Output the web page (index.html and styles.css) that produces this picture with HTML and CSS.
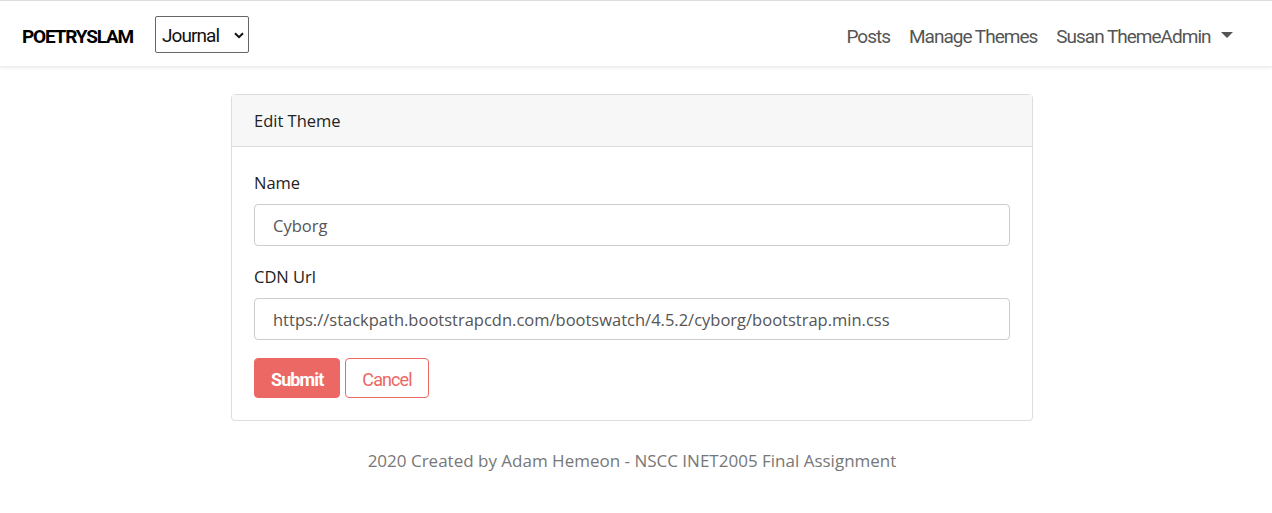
FILE: index.html
```html
<!DOCTYPE html>
<html>
<head>
<meta charset="utf-8">
<link rel="stylesheet" href="styles.css">
</head>
<body>
<nav class="navbar">
  <div class="nav-left">
    <a class="brand">POETRYSLAM</a>
    <div class="theme-select">
      <span>Journal</span>
      <svg width="10" height="7" viewBox="0 0 10 7"><path d="M1 1.2 5 5.2 9 1.2" fill="none" stroke="#111" stroke-width="2"/></svg>
    </div>
  </div>
  <ul class="nav-links">
    <li><a>Posts</a></li>
    <li><a>Manage Themes</a></li>
    <li><a class="dropdown">Susan ThemeAdmin<span class="caret"></span></a></li>
  </ul>
</nav>
<main class="main">
  <section class="card">
    <header class="card-header">Edit Theme</header>
    <div class="card-body">
      <div class="form-group">
        <label>Name</label>
        <div class="input">Cyborg</div>
      </div>
      <div class="form-group">
        <label>CDN Url</label>
        <div class="input">https://stackpath.bootstrapcdn.com/bootswatch/4.5.2/cyborg/bootstrap.min.css</div>
      </div>
      <div class="buttons">
        <button class="btn btn-primary">Submit</button>
        <button class="btn btn-outline">Cancel</button>
      </div>
    </div>
  </section>
  <footer class="footer">2020 Created by Adam Hemeon - NSCC INET2005 Final Assignment</footer>
</main>
</body>
</html>
```

FILE: styles.css
```css
html, body { margin: 0; padding: 0; }
body {
  font-family: "Open Sans", "Noto Sans", sans-serif;
  font-size: 16.5px;
  color: #222;
  background: #fff;
  border-top: 1px solid #ddd;
}
.navbar {
  display: flex;
  justify-content: space-between;
  align-items: center;
  height: 66px;
  box-sizing: border-box;
  padding: 2px 22px 0;
  background: #fff;
  box-shadow: 0 1px 3px rgba(0,0,0,0.08);
  border-bottom: 1px solid #eee;
  font-family: Roboto, "Liberation Sans", sans-serif;
}
.nav-left { display: flex; align-items: center; }
.brand {
  font-weight: bold;
  font-size: 19px;
  color: #000;
  margin-right: 22px;
  letter-spacing: -1.2px;
  padding-top: 4px;
}
.theme-select {
  display: flex;
  align-items: center;
  justify-content: space-between;
  box-sizing: border-box;
  width: 94px;
  height: 37px;
  border: 1px solid #666;
  border-radius: 2px;
  padding: 2px 4px 0 6px;
  font-size: 19px;
  letter-spacing: -0.9px;
  color: #111;
}
.nav-links { display: flex; list-style: none; margin: 0; padding: 4px 8px 0 0; }
.nav-links li a {
  display: flex;
  align-items: center;
  font-size: 19px;
  letter-spacing: -1px;
  color: #555;
  padding: 0 9.5px;
}
.caret {
  display: inline-block;
  margin-left: 10px;
  border-top: 6px solid #555;
  border-left: 6px solid transparent;
  border-right: 6px solid transparent;
  margin-top: -4px;
}
.main { padding-top: 27px; }
.card {
  width: 802px;
  margin-left: 231px;
  box-sizing: border-box;
  border: 1px solid #ddd;
  border-radius: 4px;
}
.card-header {
  background: #f7f7f7;
  border-bottom: 1px solid #ddd;
  height: 52px;
  box-sizing: border-box;
  padding: 0 22px;
  display: flex;
  align-items: center;
  font-size: 16.5px;
  color: #222;
}
.card-body { padding: 24px 22px 22px; }
.form-group { margin-bottom: 19px; }
.form-group:nth-last-child(2) { margin-bottom: 18px; }
.form-group label { display: block; margin-bottom: 9px; line-height: 24px; }
.input {
  height: 42px;
  box-sizing: border-box;
  border: 1px solid #ccc;
  border-radius: 4px;
  padding: 0 18px;
  display: flex;
  align-items: center;
  color: #555;
}
.buttons { display: flex; gap: 5px; }
.btn {
  height: 40px;
  box-sizing: border-box;
  border-radius: 4px;
  font-family: Roboto, "Liberation Sans", sans-serif;
  font-size: 18px;
  letter-spacing: -0.9px;
  padding: 2px 16px 0;
  cursor: pointer;
}
.btn-primary { background: #eb6864; border: 1px solid #eb6864; color: #fff; font-weight: bold; }
.btn-outline { background: #fff; border: 1px solid #eb6864; color: #eb6864; }
.footer {
  text-align: center;
  color: #777;
  font-size: 17px;
  width: 802px;
  margin-left: 231px;
  padding-top: 28px;
}
```
